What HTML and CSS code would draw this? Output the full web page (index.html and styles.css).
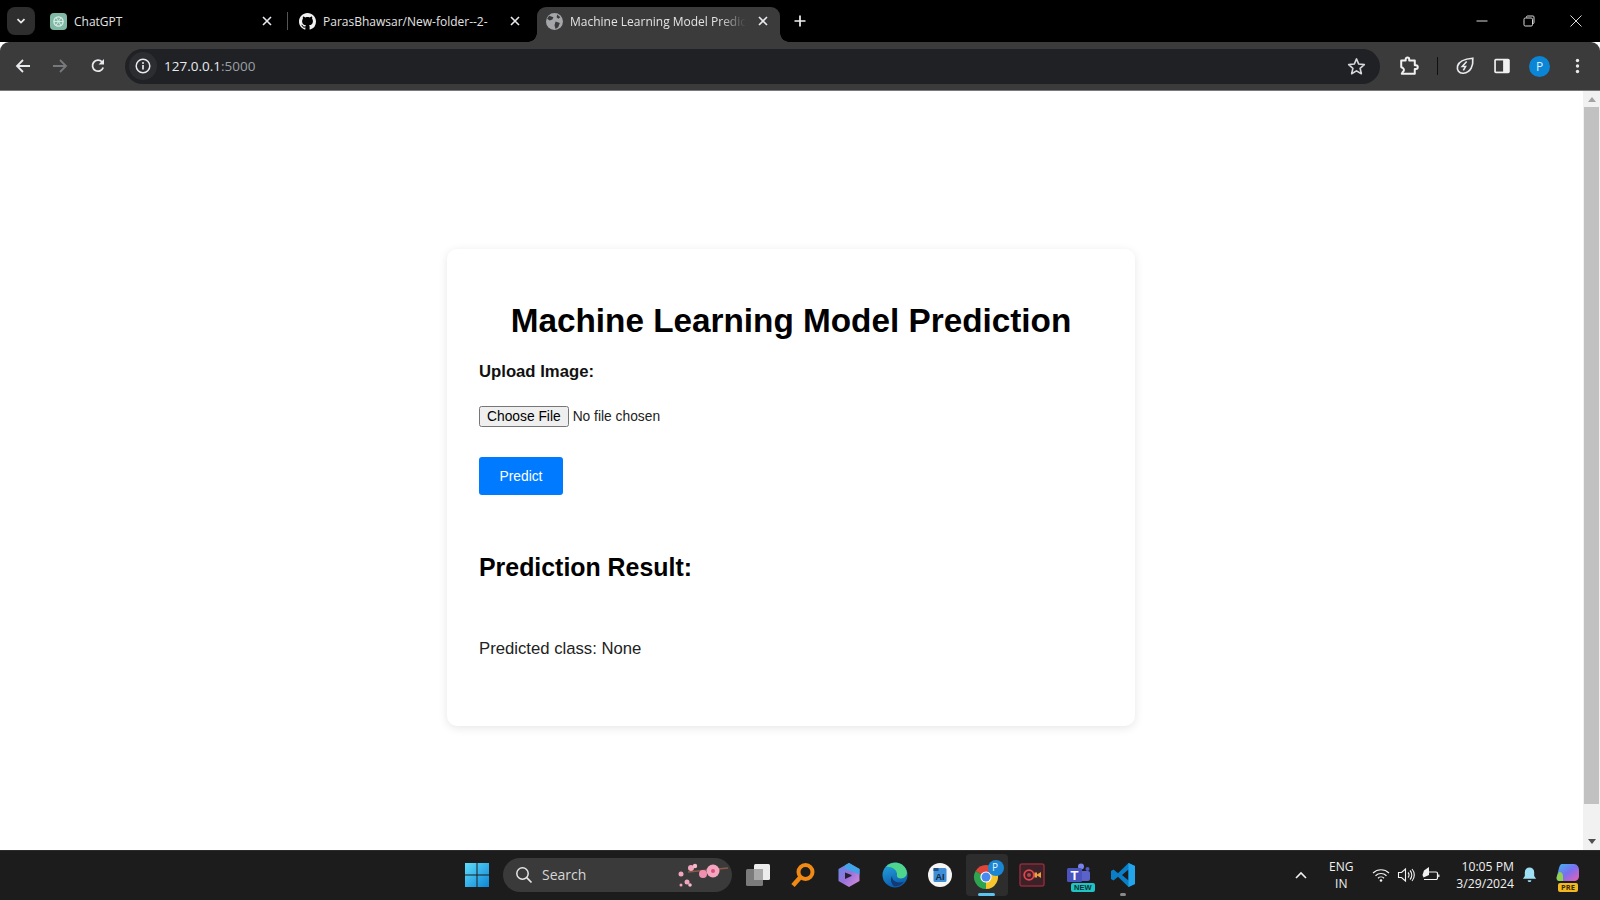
FILE: index.html
```html
<!DOCTYPE html>
<html lang="en">
<head>
  <meta charset="UTF-8">
  <title>Machine Learning Model Prediction</title>
  <link rel="stylesheet" href="styles.css">
</head>
<body>

  <div class="tabstrip">
    <div class="tab-toggle">
      <svg width="12" height="12" viewBox="0 0 12 12"><path d="M2.5 4.2 6 7.6l3.5-3.4" fill="none" stroke="#e8eaed" stroke-width="1.8"/></svg>
    </div>
    <div class="tab tab-first">
      <svg class="favicon" viewBox="0 0 17 17"><rect width="17" height="17" rx="4" fill="#7fb8a4"/><circle cx="8.5" cy="8.5" r="4.6" fill="none" stroke="#dcefe8" stroke-width="1.3"/><path d="M6 4.5 11 12.500M11 4.500 6 12.500M3.900 8.500h9.200" stroke="#dcefe8" stroke-width=".9"/></svg>
      <span class="tab-title">ChatGPT</span>
      <svg class="tab-close" viewBox="0 0 10 10"><path d="M1 1l8 8M9 1 1 9" stroke="#e8eaed" stroke-width="1.6"/></svg>
    </div>
    <div class="tab-sep"></div>
    <div class="tab tab-second">
      <svg class="favicon" viewBox="0 0 16 16"><path fill="#f1f1f1" d="M8 0C3.580 0 0 3.580 0 8c0 3.540 2.290 6.530 5.470 7.590.4.070.55-.17.55-.38 0-.19-.01-.82-.01-1.490-2.010.37-2.530-.49-2.690-.94-.09-.23-.48-.94-.82-1.130-.28-.15-.68-.52-.01-.53.63-.01 1.080.58 1.230.82.72 1.210 1.870.87 2.330.66.07-.52.28-.87.51-1.070-1.780-.2-3.640-.89-3.640-3.950 0-.87.31-1.590.82-2.150-.08-.2-.36-1.020.08-2.120 0 0 .67-.21 2.200.82.64-.18 1.320-.27 2-.27s1.360.09 2 .27c1.530-1.040 2.200-.82 2.200-.82.44 1.100.16 1.920.08 2.120.51.56.82 1.270.82 2.150 0 3.070-1.870 3.750-3.650 3.950.29.25.54.73.54 1.480 0 1.070-.01 1.930-.01 2.200 0 .21.150.46.550.38A8.010 8.010 0 0 0 16 8c0-4.420-3.580-8-8-8z"/></svg>
      <span class="tab-title">ParasBhawsar/New-folder--2-</span>
      <svg class="tab-close" viewBox="0 0 10 10"><path d="M1 1l8 8M9 1 1 9" stroke="#e8eaed" stroke-width="1.6"/></svg>
    </div>
    <div class="tab tab-active">
      <svg class="favicon" viewBox="0 0 16 16"><circle cx="8" cy="8" r="8" fill="#a4a6a9"/><path fill="#3b3b3b" d="M3 2.500 7 4 6 6 3.500 7 1 5.500zM9 8l4 1.500-1.500 4-2.500 1.500-1-3.500zM10.500 1.500 13.500 4l-2 1.500-1.500-1.500z"/></svg>
      <span class="tab-title tab-title-fade">Machine Learning Model Predic</span>
      <svg class="tab-close" viewBox="0 0 10 10"><path d="M1 1l8 8M9 1 1 9" stroke="#e8eaed" stroke-width="1.6"/></svg>
    </div>
    <svg class="new-tab" viewBox="0 0 12 12"><path d="M6 .5v11M.5 6h11" stroke="#f1f1f1" stroke-width="1.7"/></svg>
    <div class="window-controls">
      <svg viewBox="0 0 12 12"><path d="M.500 6h11" stroke="#d8d8d8"/></svg>
      <svg viewBox="0 0 12 12"><path d="M3.500 2.500V2a1 1 0 0 1 1-1H10a1 1 0 0 1 1 1v5.500a1 1 0 0 1-1 1h-.5" fill="none" stroke="#d8d8d8"/><rect x="1" y="3" width="8.500" height="8" rx="1.300" fill="none" stroke="#d8d8d8"/></svg>
      <svg viewBox="0 0 12 12"><path d="M.500.5l11 11M11.500.5l-11 11" stroke="#d8d8d8"/></svg>
    </div>
  </div>

  <div class="toolbar">
    <svg class="nav nav-back" viewBox="0 0 16 16"><path d="M15 8H2.500M8 2 2 8l6 6" fill="none" stroke="#e8eaed" stroke-width="1.800"/></svg>
    <svg class="nav nav-forward" viewBox="0 0 16 16"><path d="M1 8h12.500M8 2l6 6-6 6" fill="none" stroke="#77797c" stroke-width="1.800"/></svg>
    <svg class="nav nav-reload" viewBox="0 0 16 16"><path d="M13.200 9.500A5.500 5.500 0 1 1 12 3.900" fill="none" stroke="#e8eaed" stroke-width="1.800"/><path d="M14 1v5.500H8.500z" fill="#e8eaed"/></svg>
    <div class="omnibox">
      <div class="site-chip">
        <svg width="16" height="16" viewBox="0 0 16 16"><circle cx="8" cy="8" r="6.800" fill="none" stroke="#e8eaed" stroke-width="1.500"/><path d="M8 7v4.500" stroke="#e8eaed" stroke-width="1.700"/><circle cx="8" cy="4.900" r="1" fill="#e8eaed"/></svg>
      </div>
      <span class="url">127.0.0.1<span class="url-port">:5000</span></span>
      <svg class="star" viewBox="0 0 18 18"><path d="M9 1.800l2.100 4.900 5.300.5-4 3.500 1.200 5.200L9 13.100l-4.600 2.800 1.200-5.200-4-3.500 5.300-.5z" fill="none" stroke="#d5d7da" stroke-width="1.500" stroke-linejoin="round"/></svg>
    </div>
    <svg class="tool tool-ext" viewBox="0 0 18 18"><path d="M2 4h4V3a1.600 1.600 0 0 1 3.200 0v1h5v4.300h1a1.700 1.700 0 0 1 0 3.400h-1V16H2.500l1-1.800a2 2 0 0 0 0-3.400L2 10z" fill="none" stroke="#f1f1f1" stroke-width="1.800" stroke-linejoin="round"/></svg>
    <div class="tool-sep"></div>
    <svg class="tool tool-leaf" viewBox="0 0 18 18"><path d="M16 2c.5 6.500-1.500 13-8.500 13.500C3.500 15.800 1.500 12.500 2.300 9 3.500 4.500 10 2.500 16 2z" fill="none" stroke="#e8eaed" stroke-width="1.500"/><path d="M10.500 5 6.500 9.500h3L7.500 13" fill="none" stroke="#e8eaed" stroke-width="1.400"/></svg>
    <svg class="tool tool-side" viewBox="0 0 18 18"><rect x="2" y="2.500" width="14" height="13" rx="1.500" fill="#f1f1f1"/><rect x="3.500" y="4" width="6.500" height="10" fill="#3b3b3b"/></svg>
    <div class="avatar">P</div>
    <svg class="tool tool-menu" viewBox="0 0 4 16"><circle cx="2" cy="2.500" r="1.700" fill="#e8eaed"/><circle cx="2" cy="8" r="1.700" fill="#e8eaed"/><circle cx="2" cy="13.500" r="1.700" fill="#e8eaed"/></svg>
  </div>

  <div class="viewport">
    <main class="page">
      <div class="card">
        <h1>Machine Learning Model Prediction</h1>
        <form>
          <label for="image">Upload Image:</label>
          <input type="file" id="image">
          <button type="button" class="predict">Predict</button>
        </form>
        <h2>Prediction Result:</h2>
        <p class="result">Predicted class: None</p>
      </div>
    </main>
    <div class="scrollbar">
      <span class="arrow arrow-up"></span>
      <div class="thumb"></div>
      <span class="arrow arrow-down"></span>
    </div>
  </div>

  <div class="taskbar">
    <div class="task-center">
      <svg class="task-icon win" viewBox="0 0 26 26">
        <defs><linearGradient id="winblue" x1="0" y1="0" x2="1" y2="1"><stop offset="0" stop-color="#5fdcfb"/><stop offset="1" stop-color="#0d86d8"/></linearGradient></defs>
        <path fill="url(#winblue)" d="M1 1h11.500v11.500H1zM13.500 1H25v11.500H13.500zM1 13.500h11.500V25H1zM13.500 13.500H25V25H13.500z"/>
      </svg>
      <div class="search-box">
        <svg width="18" height="18" viewBox="0 0 18 18"><circle cx="7.500" cy="7.500" r="5.700" fill="none" stroke="#e6e6e6" stroke-width="1.500"/><path d="M11.700 11.700 16.500 16.500" stroke="#e6e6e6" stroke-width="1.700"/></svg>
        <span class="search-label">Search</span>
        <svg class="blossom" width="54" height="28" viewBox="0 0 54 28"><path d="M12 11 52 7" stroke="#8d5a4a" stroke-width="1.500"/><circle cx="15" cy="7" r="3" fill="#f2a6bd"/><circle cx="19" cy="5" r="2.200" fill="#f6b9cb"/><circle cx="5" cy="13" r="2.500" fill="#f2a6bd"/><circle cx="27" cy="13" r="4" fill="#f18fb0"/><circle cx="37" cy="10" r="6.500" fill="#f6a5c0"/><circle cx="37" cy="10" r="2" fill="#d9507f"/><circle cx="11" cy="21" r="2.500" fill="#f2a6bd"/><circle cx="14" cy="24" r="1.800" fill="#f6b9cb"/><circle cx="5" cy="24" r="1.500" fill="#f2a6bd"/></svg>
      </div>
      <svg class="task-icon task-view" viewBox="0 0 26 26"><rect x="9" y="2" width="16" height="16" rx="1.500" fill="#ececec"/><rect x="1" y="7" width="17" height="17" rx="1.500" fill="#7b7b7b"/><rect x="9" y="7" width="9" height="11" fill="#a9a9a9"/></svg>
      <svg class="task-icon" viewBox="0 0 26 26"><circle cx="15.500" cy="10" r="7" fill="none" stroke="#f08a14" stroke-width="4"/><path d="M10.500 15 3 23.500" stroke="#f08a14" stroke-width="4.500"/></svg>
      <svg class="task-icon task-hex" viewBox="0 0 26 26"><defs><linearGradient id="cop" x1="0" y1="0" x2="1" y2="1"><stop offset="0" stop-color="#5c8fe8"/><stop offset=".5" stop-color="#9a72dc"/><stop offset="1" stop-color="#d98fd8"/></linearGradient></defs><path fill="url(#cop)" d="M13 1 23.500 7v12L13 25 2.500 19V7z"/><path fill="#3fa5e8" d="M9 3.300 13 1l10.500 6v5.500L9 6.500z"/><path fill="#232030" d="M9 10.500 15.500 13v1L9 17z"/></svg>
      <svg class="task-icon task-edge" viewBox="0 0 26 26"><defs><linearGradient id="edge" x1="0" y1="0" x2=".3" y2="1"><stop offset="0" stop-color="#28a8de"/><stop offset="1" stop-color="#0c5fb0"/></linearGradient></defs><circle cx="13" cy="13" r="12.500" fill="url(#edge)"/><path fill="#4fd68c" d="M4 5C9-1 21-1 24.500 8.500c1.500 4.500-1.500 8-5.500 8-3 0-4.500-1.500-4-3.500C15.500 9 11 4 4 5z"/><path fill="#123a78" d="M10 14c0 5 5 8 12 5.500-2 3-6 5-9.500 5C9 22 8 17 10 14z"/></svg>
      <div class="task-word">
        <svg width="26" height="26" viewBox="0 0 26 26"><circle cx="13" cy="13" r="12" fill="#f5f5f5"/><rect x="6.500" y="6" width="13" height="14" rx="1.500" fill="#3f8fd8"/><rect x="6.500" y="6" width="5" height="3" fill="#1f4f80"/><text class="word-text" x="13" y="18" text-anchor="middle">AI</text></svg>
      </div>
      <div class="task-active">
        <svg width="34" height="34" viewBox="0 0 34 34">
          <path fill="#e0453a" d="M4.600 12A12 12 0 0 1 25.400 12L15 18z"/>
          <path fill="#f8c52c" d="M25.400 12A12 12 0 0 1 15 30L15 18z"/>
          <path fill="#2fa44f" d="M15 30A12 12 0 0 1 4.600 12L15 18z"/>
          <circle cx="15" cy="18" r="5.600" fill="#fff"/>
          <circle cx="15" cy="18" r="4.500" fill="#4a8af0"/>
          <circle cx="25" cy="9" r="8" fill="#1a86d4"/>
        </svg>
        <span class="active-p">P</span>
        <span class="active-bar"></span>
      </div>
      <svg class="task-icon task-record" viewBox="0 0 26 26"><rect x="1" y="2" width="24" height="22" rx="2" fill="#3a2228" stroke="#8f2a3a" stroke-width="1.500"/><circle cx="10" cy="13" r="4.800" fill="none" stroke="#e8434c" stroke-width="1.800"/><circle cx="10" cy="13" r="2" fill="#b8434c"/><path d="M15.500 10.500h2.500v5h-2.500zM18 12.500l4-2.500v6l-4-2.500z" fill="#f0a040"/></svg>
      <div class="task-teams">
        <svg width="26" height="26" viewBox="0 0 26 26"><circle cx="16" cy="4.500" r="3" fill="#7b83eb"/><circle cx="22.500" cy="7" r="2" fill="#5059c9"/><rect x="13" y="9" width="12" height="10" rx="2" fill="#5b62c9"/><rect x="2" y="6" width="15" height="14" rx="1.500" fill="#4b53bc"/><text class="teams-text" x="9.500" y="17.500" text-anchor="middle">T</text></svg>
        <span class="new-badge">NEW</span>
      </div>
      <div class="task-code">
        <svg width="26" height="26" viewBox="0 0 26 26"><path fill="#0a7fc8" d="M18.500 1 25 4v18l-6.500 3L8 14.800 3.500 18.500 1 17v-8l2.500-1.500L8 11.200zM18.500 7.500 12 13l6.500 5.500z"/><path fill="#23a5ee" d="M18.500 1 25 4v18l-6.500 3z"/></svg>
        <span class="code-dot"></span>
      </div>
    </div>
    <div class="tray">
      <svg class="tray-chevron" viewBox="0 0 12 8"><path d="M1 7l5-5 5 5" fill="none" stroke="#f1f1f1" stroke-width="1.600"/></svg>
      <div class="lang">ENG<br>IN</div>
      <svg class="tray-icon tray-wifi" viewBox="0 0 18 16"><path d="M1 6a11.500 11.500 0 0 1 16 0M3.500 8.700a8 8 0 0 1 11 0M6 11.200a4.300 4.300 0 0 1 6 0" fill="none" stroke="#f1f1f1" stroke-width="1.200"/><circle cx="9" cy="13.500" r="1.300" fill="#f1f1f1"/></svg>
      <svg class="tray-icon tray-vol" viewBox="0 0 18 16"><path d="M1.500 5.500h3L8.500 2v12l-4-3.500h-3z" fill="none" stroke="#f1f1f1" stroke-width="1.100"/><path d="M11 5.500a3.500 3.500 0 0 1 0 5M13 3.500a6.500 6.500 0 0 1 0 9M15 2a9 9 0 0 1 0 12" fill="none" stroke="#f1f1f1" stroke-width="1.100"/></svg>
      <svg class="tray-icon tray-batt" viewBox="0 0 18 16"><path d="M7 5h7a1.500 1.500 0 0 1 1.500 1.500V11a1.500 1.500 0 0 1-1.500 1.500H2" fill="none" stroke="#f1f1f1" stroke-width="1.200"/><path d="M16.800 7.500v2.500" stroke="#f1f1f1" stroke-width="1.300"/><path d="M7 0 2 3.500.5 8l1 2.500L7 8z" fill="#f1f1f1"/></svg>
      <div class="clock">10:05 PM<br>3/29/2024</div>
      <svg class="tray-bell" viewBox="0 0 16 18"><path fill="#9fe0f5" d="M8 1a5 5 0 0 1 5 5v4l2 3H1l2-3V6a5 5 0 0 1 5-5zM6 14.500h4a2 2 0 0 1-4 0z"/></svg>
      <div class="tray-copilot">
        <svg width="26" height="26" viewBox="0 0 26 26"><defs><linearGradient id="pre" x1="0" y1="0" x2="1" y2="1"><stop offset="0" stop-color="#3bb8f0"/><stop offset=".5" stop-color="#7a6ff0"/><stop offset="1" stop-color="#ee5fb0"/></linearGradient></defs><path fill="url(#pre)" d="M7 2h12c3 0 5 3 5 6v6c0 3-2 5-5 5H5c-3 0-4-2-3-5L4 6c.5-2 1.500-4 3-4z"/><path fill="#8ed14f" d="M4 10c3 0 4 2 4 4v5H5c-3 0-4-2-3-5z"/></svg>
        <span class="pre-badge">PRE</span>
      </div>
    </div>
  </div>

</body>
</html>
```

FILE: styles.css
```css
* {
  box-sizing: border-box;
}
html, body {
  margin: 0;
  height: 100%;
  overflow: hidden;
}
body {
  display: flex;
  flex-direction: column;
  width: 1600px;
  height: 900px;
  font-family: "Liberation Sans", Arial, sans-serif;
  background: #fff;
}

/* tab strip */
.tabstrip {
  display: flex;
  align-items: center;
  height: 42px;
  background: #000;
  color: #e3e3e3;
  font-family: "Open Sans", sans-serif;
  font-size: 12px;
}
.tab-toggle {
  display: flex;
  align-items: center;
  justify-content: center;
  width: 28px;
  height: 28px;
  margin-left: 7px;
  border-radius: 8px;
  background: #2e2e2e;
}
.tab {
  display: flex;
  align-items: center;
}
.tab-first {
  width: 225px;
  margin-left: 15px;
}
.tab-second {
  width: 224px;
  margin-left: 11px;
}
.favicon {
  flex: none;
  width: 17px;
  height: 17px;
}
.tab-title {
  flex: 1;
  margin-left: 7px;
  white-space: nowrap;
}
.tab-close {
  flex: none;
  width: 10px;
  height: 10px;
  margin-right: 3px;
}
.tab-sep {
  width: 1px;
  height: 18px;
  margin-left: 12px;
  background: #555;
}
.tab-active {
  position: relative;
  align-self: flex-end;
  width: 243px;
  height: 35px;
  margin-left: 14px;
  padding: 0 15px 7px 9px;
  border-radius: 9px 9px 0 0;
  background: #3b3b3b;
}
.tab-active::before,
.tab-active::after {
  content: "";
  position: absolute;
  bottom: 0;
  width: 9px;
  height: 9px;
}
.tab-active::before {
  left: -9px;
  background: radial-gradient(circle at 0 0, #000 8.5px, #3b3b3b 9px);
}
.tab-active::after {
  right: -9px;
  background: radial-gradient(circle at 100% 0, #000 8.5px, #3b3b3b 9px);
}
.tab-title-fade {
  margin-right: 12px;
  -webkit-mask-image: linear-gradient(to right, #000 85%, transparent);
  mask-image: linear-gradient(to right, #000 85%, transparent);
}
.new-tab {
  width: 12px;
  height: 12px;
  margin-left: 14px;
}
.window-controls {
  display: flex;
  gap: 35px;
  margin-left: auto;
  margin-right: 18px;
}
.window-controls svg {
  width: 12px;
  height: 12px;
}

/* address bar */
.toolbar {
  display: flex;
  align-items: center;
  height: 49px;
  border-radius: 9px 9px 0 0;
  border-bottom: 1px solid #77797c;
  background: #3b3b3b;
}
.nav {
  flex: none;
  width: 16px;
  height: 16px;
}
.nav-back {
  margin-left: 15px;
}
.nav-forward {
  margin-left: 21px;
}
.nav-reload {
  margin-left: 22px;
}
.omnibox {
  display: flex;
  align-items: center;
  width: 1255px;
  height: 35px;
  margin-left: 19px;
  border-radius: 18px;
  background: #202124;
}
.site-chip {
  display: flex;
  align-items: center;
  justify-content: center;
  width: 28px;
  height: 28px;
  margin-left: 4px;
  border-radius: 50%;
  background: #2c2d30;
}
.url {
  margin-left: 7px;
  color: #e8eaed;
  font-family: "Open Sans", sans-serif;
  font-size: 13.500px;
}
.url-port {
  color: #9aa0a6;
}
.star {
  width: 19px;
  height: 19px;
  margin-left: auto;
  margin-right: 14px;
}
.tool {
  flex: none;
  width: 20px;
  height: 20px;
}
.tool-ext {
  margin-left: 19px;
}
.tool-sep {
  width: 1px;
  height: 18px;
  margin-left: 18px;
  background: #101010;
}
.tool-leaf {
  margin-left: 17px;
}
.tool-side {
  margin-left: 17px;
}
.avatar {
  flex: none;
  width: 21px;
  height: 21px;
  margin-left: 17px;
  border-radius: 50%;
  background: #0b85d6;
  color: #dff1fc;
  font-family: "Open Sans", sans-serif;
  font-size: 12px;
  line-height: 21px;
  text-align: center;
}
.tool-menu {
  width: 5px;
  height: 16px;
  margin-left: 25px;
}

/* page */
.viewport {
  flex: 1;
  display: flex;
  min-height: 0;
}
.page {
  flex: 1;
  padding: 158px 0 0 447px;
}
.card {
  width: 688px;
  height: 477px;
  padding: 32px;
  border-radius: 10px;
  background: #fff;
  box-shadow: 0 2px 10px rgba(0, 0, 0, 0.1);
}
h1 {
  margin: 20px 0 0;
  color: #000;
  font-size: 33.300px;
  line-height: 40px;
  text-align: center;
}
form label {
  display: block;
  margin-top: 20px;
  color: #111;
  font-size: 16.700px;
  font-weight: bold;
  line-height: 22px;
}
input[type="file"] {
  display: block;
  margin-top: 23px;
  color: #222;
  font-family: "Liberation Sans", Arial, sans-serif;
  font-size: 13.800px;
}
.predict {
  display: block;
  width: 84px;
  height: 38px;
  margin-top: 30px;
  padding: 0;
  border: none;
  border-radius: 3px;
  background: #007bff;
  color: #fff;
  font-family: "Liberation Sans", Arial, sans-serif;
  font-size: 13.800px;
}
h2 {
  margin: 56px 0 0;
  color: #000;
  font-size: 24.900px;
  line-height: 32px;
}
.result {
  margin: 56px 0 0;
  color: #222;
  font-size: 16.700px;
  line-height: 20px;
}

/* scrollbar */
.scrollbar {
  display: flex;
  flex: none;
  flex-direction: column;
  align-items: center;
  width: 17px;
  background: #f1f1f1;
}
.arrow {
  flex: none;
  width: 0;
  height: 0;
  border-left: 4px solid transparent;
  border-right: 4px solid transparent;
}
.arrow-up {
  margin: 6px 0 5px;
  border-bottom: 5px solid #a3a3a3;
}
.arrow-down {
  margin: auto 0 6px;
  border-top: 5px solid #505050;
}
.thumb {
  flex: none;
  width: 15px;
  height: 697px;
  background: #c1c1c1;
}

/* taskbar */
.taskbar {
  display: flex;
  flex: none;
  align-items: center;
  height: 50px;
  padding-bottom: 2px;
  border-top: 1px solid #2c2c2c;
  background: #1c1c1c;
}
.task-center {
  display: flex;
  align-items: center;
  margin-left: 464px;
}
.task-icon {
  flex: none;
  width: 26px;
  height: 26px;
  margin-left: 19px;
}
.win {
  margin-left: 0;
}
.task-view {
  margin-left: 13px;
}
.task-hex,
.task-edge {
  margin-left: 20px;
}
.task-record {
  margin-left: 11px;
}
.search-box {
  display: flex;
  align-items: center;
  width: 229px;
  height: 34px;
  margin-left: 13px;
  padding-left: 12px;
  border-radius: 17px;
  background: #3a3a3a;
  color: #d6d6d6;
  font-family: "Open Sans", sans-serif;
  font-size: 14px;
}
.search-label {
  margin-left: 9px;
}
.blossom {
  margin-left: auto;
  margin-right: 2px;
}
.task-word,
.task-teams,
.task-code {
  position: relative;
  flex: none;
  width: 26px;
  height: 26px;
}
.task-word {
  margin-left: 19px;
}
.word-text {
  fill: #12263f;
  font-family: "Liberation Sans", Arial, sans-serif;
  font-size: 9px;
  font-weight: bold;
}
.teams-text {
  fill: #fff;
  font-family: "Liberation Sans", Arial, sans-serif;
  font-size: 13px;
  font-weight: bold;
}
.task-active {
  position: relative;
  flex: none;
  width: 42px;
  height: 42px;
  margin-left: 13px;
  padding: 5px 0 0 5px;
  border-radius: 4px;
  background: #2d2d2d;
}
.active-p {
  position: absolute;
  top: 6px;
  left: 26px;
  color: #e6f4fc;
  font-family: "Open Sans", sans-serif;
  font-size: 10px;
}
.active-bar {
  position: absolute;
  left: 12px;
  bottom: 0;
  width: 17px;
  height: 3px;
  border-radius: 2px;
  background: #5cc4f0;
}
.task-teams {
  margin-left: 20px;
}
.new-badge {
  position: absolute;
  left: 6px;
  bottom: -4px;
  padding: 0 3px;
  border-radius: 2px;
  background: #1fc4c4;
  color: #10302f;
  font-size: 7.500px;
  font-weight: bold;
  line-height: 9px;
}
.task-code {
  margin-left: 19px;
}
.code-dot {
  position: absolute;
  left: 10px;
  bottom: -8px;
  width: 6px;
  height: 3px;
  border-radius: 2px;
  background: #8a8a8a;
}
.tray {
  display: flex;
  align-items: center;
  margin-left: auto;
  margin-right: 19px;
  color: #f1f1f1;
  font-family: "Open Sans", sans-serif;
  font-size: 12px;
  line-height: 17px;
}
.tray-chevron {
  width: 12px;
  height: 8px;
}
.lang {
  width: 34px;
  margin-left: 17px;
  text-align: center;
}
.tray-icon {
  width: 18px;
  height: 16px;
  margin-left: 7px;
}
.tray-wifi {
  margin-left: 14px;
}
.clock {
  margin-left: 16px;
  font-size: 12.200px;
  text-align: right;
}
.tray-bell {
  width: 15px;
  height: 18px;
  margin-left: 8px;
}
.tray-copilot {
  position: relative;
  width: 26px;
  height: 26px;
  margin-left: 18px;
}
.pre-badge {
  position: absolute;
  left: 3px;
  bottom: -4px;
  padding: 0 3px;
  border-radius: 2px;
  background: #f2b824;
  color: #3a2a00;
  font-size: 7.500px;
  font-weight: bold;
  line-height: 9px;
}
```
